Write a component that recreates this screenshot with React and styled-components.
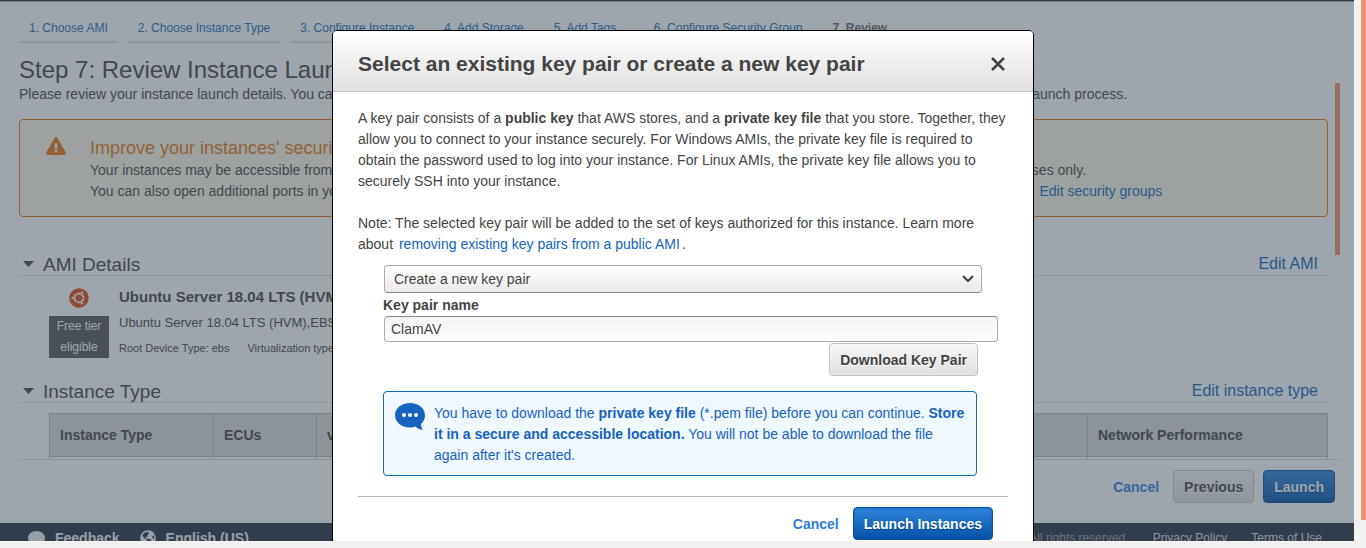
import React, { useState } from 'react';
import styled, { createGlobalStyle, css } from 'styled-components';
import { FaComment, FaExclamationTriangle, FaGlobeAmericas, FaUbuntu } from 'react-icons/fa';

const steps = [
	'1. Choose AMI',
	'2. Choose Instance Type',
	'3. Configure Instance',
	'4. Add Storage',
	'5. Add Tags',
	'6. Configure Security Group',
	'7. Review',
];

const columns = [
	{ name: 'Instance Type', width: '164px' },
	{ name: 'ECUs', width: '103px' },
	{ name: 'vCPUs', width: '103px' },
	{ name: 'Memory (GiB)', width: '140px' },
	{ name: 'Instance Storage (GB)', width: '190px' },
	{ name: 'EBS-Optimized Available' },
	{ name: 'Network Performance', width: '240px' },
];

function Section({ title, action, children }) {
	return (
		<section>
			<SectionHeader>
				<Caret viewBox="0 0 11 6">
					<path d="M0 0h11L5.5 6z" fill="currentColor" />
				</Caret>
				<SectionTitle>{title}</SectionTitle>
				<SectionLink href="#edit">{action}</SectionLink>
			</SectionHeader>
			{children}
		</section>
	);
}

function ReviewPage() {
	return (
		<Screen>
			<TopBar />
			<Main>
				<Steps>
					{steps.map((step, i) => (
						<Step key={step} href="#step" $active={i === steps.length - 1}>
							{step}
						</Step>
					))}
				</Steps>
				<PageTitle>Step 7: Review Instance Launch</PageTitle>
				<Scroller>
					<ScrollThumb />
					<p>
						Please review your instance launch details. You can go back to edit changes for
						each section. Click <b>Launch</b> to assign a key pair to your instance and
						complete the launch process.
					</p>
					<Alert>
						<FaExclamationTriangle size={20} />
						<div>
							<AlertTitle>
								Improve your instances' security. Your security group, launch-wizard-1, is
								open to the world.
							</AlertTitle>
							<p>
								Your instances may be accessible from any IP address. We recommend that you
								update your security group rules to allow access from known IP addresses only.
							</p>
							<p>
								You can also open additional ports in your security group to facilitate access
								to the application or service you're running, e.g., HTTP (80) for web servers.{' '}
								<Link href="#groups">Edit security groups</Link>
							</p>
						</div>
					</Alert>
					<Section title="AMI Details" action="Edit AMI">
						<Ami>
							<AmiLogo>
								<FaUbuntu size={20} />
								<FreeTier>Free tier eligible</FreeTier>
							</AmiLogo>
							<AmiText>
								<AmiName>Ubuntu Server 18.04 LTS (HVM), SSD Volume Type</AmiName>
								<AmiDescription>
									Ubuntu Server 18.04 LTS (HVM),EBS General Purpose (SSD) Volume Type.
								</AmiDescription>
								<AmiMeta>
									<span>Root Device Type: ebs</span>
									<span>Virtualization type: hvm</span>
								</AmiMeta>
							</AmiText>
						</Ami>
					</Section>
					<Section title="Instance Type" action="Edit instance type">
						<Table>
							<colgroup>
								{columns.map((c) => (
									<Col key={c.name} $width={c.width} />
								))}
							</colgroup>
							<thead>
								<tr>
									{columns.map((c) => (
										<Th key={c.name}>{c.name}</Th>
									))}
								</tr>
							</thead>
							<tbody>
								<tr>
									{columns.map((c) => (
										<Td key={c.name} />
									))}
								</tr>
							</tbody>
						</Table>
					</Section>
				</Scroller>
				<Actions>
					<TextButton type="button">Cancel</TextButton>
					<Button type="button">Previous</Button>
					<Button type="button" $primary>
						Launch
					</Button>
				</Actions>
			</Main>
			<Footer>
				<FooterButton type="button">
					<FaComment size={17} />
					Feedback
				</FooterButton>
				<FooterButton type="button">
					<FaGlobeAmericas size={16} />
					English (US)
				</FooterButton>
				<Copyright>
					© 2008 - 2020, Amazon Web Services, Inc. or its affiliates. All rights reserved.
				</Copyright>
				<FooterLink href="#privacy">Privacy Policy</FooterLink>
				<FooterLink href="#terms">Terms of Use</FooterLink>
			</Footer>
			<Scrim />
		</Screen>
	);
}

function KeyPairDialog() {
	const [mode, setMode] = useState('create');
	const [name, setName] = useState('ClamAV');

	return (
		<DialogLayer>
			<Dialog role="dialog" aria-modal="true" aria-labelledby="dialog-title">
				<DialogHeader>
					<DialogTitle id="dialog-title">
						Select an existing key pair or create a new key pair
					</DialogTitle>
					<CloseButton type="button" aria-label="Close">
						<svg width="14" height="14" viewBox="0 0 14 14">
							<path d="M1 1l12 12M13 1L1 13" stroke="currentColor" strokeWidth="2.6" />
						</svg>
					</CloseButton>
				</DialogHeader>
				<DialogBody>
					<Paragraph>
						A key pair consists of a <b>public key</b> that AWS stores, and a{' '}
						<b>private key file</b> that you store. Together, they allow you to connect to
						your instance securely. For Windows AMIs, the private key file is required to
						obtain the password used to log into your instance. For Linux AMIs, the private
						key file allows you to securely SSH into your instance.
					</Paragraph>
					<p>
						Note: The selected key pair will be added to the set of keys authorized for this
						instance. Learn more about{' '}
						<Link href="#remove">removing existing key pairs from a public AMI</Link>.
					</p>
					<Form>
						<SelectBox>
							<Select
								aria-label="Key pair option"
								value={mode}
								onChange={(e) => setMode(e.target.value)}
							>
								<option value="existing">Choose an existing key pair</option>
								<option value="create">Create a new key pair</option>
								<option value="none">Proceed without a key pair</option>
							</Select>
							<Chevron viewBox="0 0 12 8">
								<path d="M1 1l5 5 5-5" fill="none" stroke="currentColor" strokeWidth="2.2" />
							</Chevron>
						</SelectBox>
						<Label htmlFor="key-name">Key pair name</Label>
						<Input id="key-name" value={name} onChange={(e) => setName(e.target.value)} />
						<FormActions>
							<Button type="button">Download Key Pair</Button>
						</FormActions>
						<Info>
							<InfoIcon viewBox="0 0 30 27">
								<path
									d="M15 0c8.300 0 15 5.400 15 12.200 0 3.600-1.500 6.500-4.200 8.800.3 2.300 1 4.200 2.100 6-3.300-.5-5.700-1.700-7.400-3.500-1.700.6-3.600.9-5.500.9C6.700 24.400 0 19 0 12.200S6.700 0 15 0z"
									fill="#1663bf"
								/>
								<circle cx="9" cy="12" r="2" fill="#fff" />
								<circle cx="15" cy="12" r="2" fill="#fff" />
								<circle cx="21" cy="12" r="2" fill="#fff" />
							</InfoIcon>
							<p>
								You have to download the <b>private key file</b> (*.pem file) before you can
								continue. <b>Store it in a secure and accessible location.</b> You will not be
								able to download the file again after it's created.
							</p>
						</Info>
					</Form>
					<DialogActions>
						<TextButton type="button">Cancel</TextButton>
						<Button type="button" $primary>
							Launch Instances
						</Button>
					</DialogActions>
				</DialogBody>
			</Dialog>
		</DialogLayer>
	);
}

function App() {
	return (
		<Window>
			<GlobalStyle />
			<ReviewPage />
			<WindowTrack>
				<WindowThumb />
			</WindowTrack>
			<KeyPairDialog />
		</Window>
	);
}

export default App;

const GlobalStyle = createGlobalStyle`
	* {
		box-sizing: border-box;
	}
	body {
		margin: 0;
		font-family: 'Liberation Sans', Arial, sans-serif;
		font-size: 14px;
		line-height: 21px;
		color: #444;
	}
	p, h1, h2, h3 {
		margin: 0;
	}
	button, input, select {
		font-family: inherit;
		font-size: 14px;
		color: inherit;
	}
	svg {
		flex: none;
	}
`;

const Window = styled.div`
	position: relative;
	display: flex;
	height: 100vh;
	padding-bottom: 7px;
	background: #f2f1f0;
	overflow: hidden;
`;

const WindowTrack = styled.div`
	display: flex;
	justify-content: flex-end;
	width: 12px;
	padding-bottom: 21px;
`;

const WindowThumb = styled.div`
	width: 5px;
	background: #f0906a;
`;

const Screen = styled.div`
	position: relative;
	display: flex;
	flex-direction: column;
	flex: 1;
	min-width: 0;
	background: #fff;
	overflow: hidden;
`;

const Scrim = styled.div`
	position: absolute;
	inset: 0;
	background: rgba(62, 76, 90, 0.5);
`;

const TopBar = styled.header`
	flex: none;
	height: 2px;
	background: #232f3e;
	border-bottom: 1px solid #a6a6b0;
`;

const Main = styled.main`
	display: flex;
	flex-direction: column;
	flex: 1;
	min-height: 0;
	padding: 17px 14px 0 19px;
`;

const Steps = styled.nav`
	display: flex;
	flex: none;
	gap: 10px;
`;

const Step = styled.a`
	min-width: 90px;
	padding: 0 10px 4px;
	border-bottom: 2px solid #e0e0e0;
	font-size: 12px;
	line-height: 18px;
	text-decoration: none;
	color: ${({ $active }) => ($active ? '#666' : '#146eb4')};
	font-weight: ${({ $active }) => ($active ? 'bold' : 'normal')};
`;

const PageTitle = styled.h1`
	flex: none;
	margin-top: 13px;
	font-size: 24px;
	line-height: 27px;
	font-weight: normal;
`;

const Scroller = styled.div`
	position: relative;
	flex: 1;
	min-height: 0;
	padding: 1px 12px 0 0;
	border-bottom: 1px solid #ddd;
	overflow: hidden;
`;

const ScrollThumb = styled.div`
	position: absolute;
	top: 0;
	right: 0;
	width: 5px;
	height: 172px;
	background: #f0906a;
`;

const Alert = styled.div`
	display: flex;
	gap: 24px;
	margin: 14px 0 35px;
	padding: 16px 26px 14px;
	border: 1px solid #e47911;
	border-radius: 4px;
	background: #fdf8e6;
	white-space: nowrap;

	> svg {
		color: #e47911;
	}
`;

const AlertTitle = styled.h2`
	font-size: 18px;
	line-height: 24px;
	font-weight: normal;
	color: #e47911;
`;

const Link = styled.a`
	margin: 0 2px;
	color: #1166bb;
	text-decoration: none;
`;

const SectionHeader = styled.header`
	display: flex;
	align-items: center;
	height: 24px;
	padding: 0 10px 0 4px;
	border-bottom: 1px solid #ddd;
`;

const Caret = styled.svg`
	width: 11px;
	height: 6px;
	margin-right: 9px;
`;

const SectionTitle = styled.h2`
	flex: 1;
	padding-top: 2px;
	font-size: 19px;
	line-height: 24px;
	font-weight: normal;
`;

const SectionLink = styled.a`
	font-size: 16px;
	color: #1166bb;
	text-decoration: none;
`;

const Ami = styled.div`
	display: flex;
	gap: 10px;
	margin: 10px 0 20px 30px;
`;

const AmiLogo = styled.div`
	display: flex;
	flex-direction: column;
	align-items: center;
	gap: 8px;
	width: 60px;
	padding-top: 2px;
	color: #dd4814;
`;

const FreeTier = styled.span`
	width: 100%;
	padding: 0 6px;
	background: #555;
	color: #fff;
	font-size: 12px;
	text-align: center;
`;

const AmiText = styled.div`
	display: flex;
	flex-direction: column;
	gap: 5px;
`;

const AmiName = styled.h3`
	font-size: 15px;
	line-height: 21px;
`;

const AmiDescription = styled.p`
	font-size: 13px;
`;

const AmiMeta = styled.div`
	display: flex;
	gap: 18px;
	font-size: 11px;
`;

const Table = styled.table`
	width: calc(100% - 30px);
	margin: 10px 0 0 30px;
	border-collapse: collapse;
	table-layout: fixed;
	white-space: nowrap;
`;

const Col = styled.col`
	width: ${({ $width }) => $width || 'auto'};
`;

const Th = styled.th`
	height: 43px;
	padding: 0 10px;
	border: 1px solid #bbb;
	background: #dadada;
	text-align: left;
	overflow: hidden;
`;

const Td = styled.td`
	height: 43px;
	border: 1px solid #bbb;
`;

const Actions = styled.div`
	display: flex;
	flex: none;
	align-items: center;
	justify-content: flex-end;
	gap: 9px;
	padding: 10px 5px 20px;
`;

const buttonBase = css`
	height: 33px;
	padding: 0 10px;
	border-radius: 4px;
	font-weight: bold;
	white-space: nowrap;
	cursor: pointer;
`;

const Button = styled.button`
	${buttonBase}
	border: 1px solid ${({ $primary }) => ($primary ? '#0a4fa0' : '#c1c1c1')};
	background: ${({ $primary }) =>
		$primary ? 'linear-gradient(#2f86dc, #0452a8)' : 'linear-gradient(#f8f8f8, #dfdfdf)'};
	color: ${({ $primary }) => ($primary ? '#fff' : '#444')};
	text-shadow: ${({ $primary }) => ($primary ? '0 1px 1px #0a4080' : '0 1px 0 #fff')};
	box-shadow: inset 0 0 2px ${({ $primary }) => ($primary ? '#0b4fa0' : '#fff')};
`;

const TextButton = styled.button`
	height: 33px;
	padding: 0 5px;
	border: 0;
	background: none;
	color: #2f7fd8;
	font-weight: bold;
	cursor: pointer;
`;

const Footer = styled.footer`
	display: flex;
	flex: none;
	align-items: center;
	height: 30px;
	margin-bottom: -12px;
	padding: 0 32px 0 28px;
	background: #232f3e;
	font-size: 12px;
`;

const FooterButton = styled.button`
	display: flex;
	align-items: center;
	gap: 10px;
	margin-right: 20px;
	padding: 0;
	border: 0;
	background: none;
	color: #f2f2f2;
	font-weight: bold;
	white-space: nowrap;
`;

const Copyright = styled.span`
	flex: 1;
	color: #999;
	text-align: right;
`;

const FooterLink = styled.a`
	margin-left: 24px;
	color: #ddd;
	text-decoration: none;
`;

const DialogLayer = styled.div`
	position: absolute;
	inset: 0 0 7px;
	display: flex;
	align-items: flex-start;
	justify-content: center;
	padding-top: 30px;
	overflow: hidden;
`;

const Dialog = styled.div`
	width: 702px;
	border: 1px solid #000;
	border-radius: 5px;
	background: #fff;
	overflow: hidden;
`;

const DialogHeader = styled.header`
	display: flex;
	align-items: center;
	justify-content: space-between;
	height: 61px;
	padding: 6px 28px 0 25px;
	border-bottom: 1px solid #c4c4c4;
	background: linear-gradient(#fff, #e0e0e0);
`;

const DialogTitle = styled.h2`
	font-size: 21px;
	line-height: 24px;
`;

const CloseButton = styled.button`
	display: flex;
	padding: 0;
	border: 0;
	background: none;
	cursor: pointer;
`;

const DialogBody = styled.div`
	padding: 16px 25px 25px;
`;

const Paragraph = styled.p`
	margin-bottom: 21px;
`;

const Form = styled.form`
	margin: 10px 10px 20px 25px;
`;

const SelectBox = styled.div`
	position: relative;
	margin: 0 16px 2px 1px;
`;

const Select = styled.select`
	display: block;
	width: 100%;
	height: 28px;
	padding: 0 9px;
	appearance: none;
	border: 1px solid #aaa;
	border-bottom-color: #888;
	border-radius: 4px;
	background: linear-gradient(#fff, #eae9e8);
`;

const Chevron = styled.svg`
	position: absolute;
	top: 10px;
	right: 8px;
	width: 12px;
	height: 8px;
	pointer-events: none;
`;

const Label = styled.label`
	display: block;
	font-weight: bold;
`;

const Input = styled.input`
	display: block;
	width: calc(100% - 1px);
	height: 26px;
	margin: 0 0 1px 1px;
	padding: 0 6px;
	border: 1px solid #aaa;
	border-top-color: #888;
	border-radius: 4px;
	background: linear-gradient(#f3f3f3, #fff);
	outline: none;
`;

const FormActions = styled.div`
	display: flex;
	justify-content: flex-end;
	margin: 0 20px 15px 0;
`;

const Info = styled.div`
	display: flex;
	gap: 9px;
	margin-right: 21px;
	padding: 11px 11px 9px;
	border: 1px solid #0f6cb6;
	border-radius: 4px;
	background: #f0f8ff;
	color: #1663bf;
`;

const InfoIcon = styled.svg`
	width: 30px;
	height: 27px;
`;

const DialogActions = styled.div`
	display: flex;
	justify-content: flex-end;
	gap: 9px;
	padding: 10px 15px 0;
	border-top: 1px solid #b4b4b4;
`;
